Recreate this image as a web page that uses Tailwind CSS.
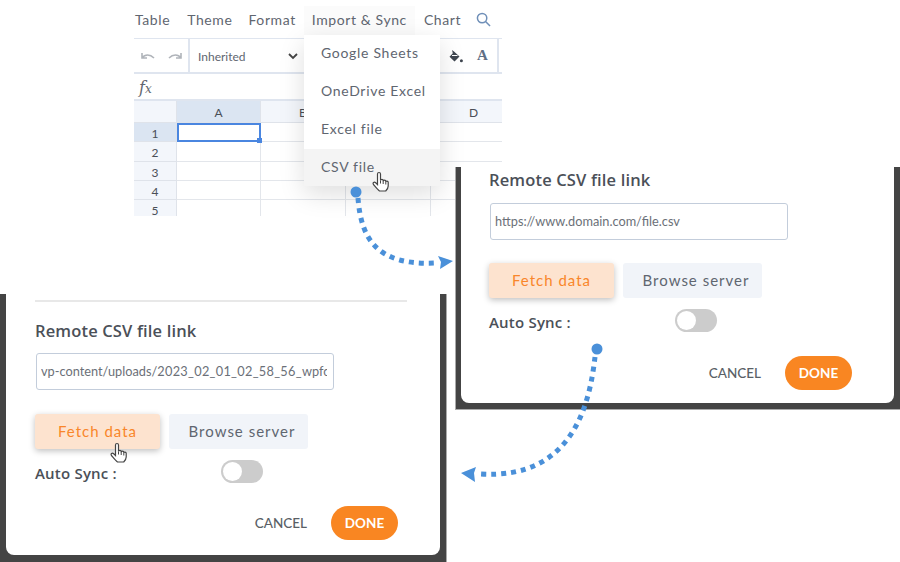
<!DOCTYPE html>
<html lang="en">
<head>
  <meta charset="UTF-8" />
  <title>CSV import</title>
  <script src="https://cdn.jsdelivr.net/npm/@tailwindcss/browser@4"></script>
</head>
<body class="bg-white font-['Lato',sans-serif] text-[#4a4f57]">
  <div class="relative w-[900px] h-[562px] overflow-hidden bg-white">

    <!-- spreadsheet -->
    <div class="absolute left-[134px] top-0 w-[368px] h-[216px] flex flex-col overflow-hidden">
      <div class="h-[39px] flex items-center gap-[17px] pl-[1px] text-[14px] tracking-[0.6px] text-[#5f6670] border-b border-[#dfe5ef]">
        <span>Table</span>
        <span>Theme</span>
        <span class="-ml-[1px]">Format</span>
        <span class="-ml-[9px] -mr-[8px] px-[8px] h-[30px] mt-[3px] pb-[2px] flex items-center bg-[#fbfbfb]">Import &amp; Sync</span>
        <span>Chart</span>
        <svg class="w-[15px] h-[15px] ml-[-2px]" viewBox="0 0 16 16" fill="none" stroke="#6f8fb8" stroke-width="1.6"><circle cx="6.500" cy="6.500" r="5"/><path d="M10.200 10.200 15 15"/></svg>
      </div>
      <div class="h-[35px] flex items-center border-b-2 border-[#dfe5ef]">
        <div class="w-[56px] h-full flex items-center pl-[7px] gap-[13px] border-r-2 border-[#dfe5ef]">
          <svg class="w-[14px] h-[8px]" viewBox="0 0 14 8" fill="none" stroke="#b0b4ba" stroke-width="1.600"><path d="M1 1v5h5M1 6c3-4 8-4 12 0"/></svg>
          <svg class="w-[14px] h-[8px]" viewBox="0 0 14 8" fill="none" stroke="#b0b4ba" stroke-width="1.600"><path d="M13 1v5H8M13 6C10 2 5 2 1 6"/></svg>
        </div>
        <div class="w-[114px] flex items-center justify-between pl-[8px] pr-[6px] pt-[2px] text-[12px] text-[#5f6670]">
          <span>Inherited</span>
          <svg class="w-[10px] h-[7px]" viewBox="0 0 10 7" fill="none" stroke="#444" stroke-width="1.800"><path d="M1 1l4 4 4-4"/></svg>
        </div>
        <div class="ml-auto mr-[3px] w-[66px] h-full flex items-center gap-[14px] pl-[16px] border-r-2 border-[#dfe5ef]">
          <svg class="w-[14px] h-[13px] mt-[1px]" viewBox="0 0 14 13"><path d="M3 0l2 1.500L10.500 6.500 5.500 11.500 .5 6.700 3.800 3.200z" fill="#3f4650"/><path d="M3 5.500h5.500" stroke="#fff" stroke-width="1"/><circle cx="12.400" cy="10.800" r="1.500" fill="#3f4650"/></svg>
          <span class="font-['Liberation_Serif',serif] text-[15px] font-bold text-[#5f6f86]">A</span>
        </div>
      </div>
      <div class="h-[27px] flex items-center pl-[5px] pt-[2px] border-b-2 border-[#dfe5ef] font-['DejaVu_Serif',serif] italic text-[#5f6670]"><span class="text-[16px]">f</span><span class="text-[12px] mt-[3px]">x</span></div>
      <div class="flex-1 grid grid-cols-[43px_84px_85px_85px_85px] grid-rows-[22px_19px_20px_19px_19px_16px] text-[12px] text-[#4a4f57] text-center">
        <div class="bg-[#f3f6fb] border-r border-b border-[#dfe3ea]"></div>
        <div class="bg-[#dbe5f2] border-r border-b border-[#dfe3ea] leading-[23px]">A</div>
        <div class="bg-[#f3f6fb] border-r border-b border-[#dfe3ea] leading-[23px]">B</div>
        <div class="bg-[#f3f6fb] border-r border-b border-[#dfe3ea] leading-[23px]">C</div>
        <div class="bg-[#f3f6fb] border-b border-[#dfe3ea] leading-[23px]">D</div>

        <div class="bg-[#dbe5f2] border-r border-b border-[#dfe3ea] leading-[21px]">1</div>
        <div class="relative border-2 border-[#4a86e0]"><span class="absolute right-[-3px] bottom-[-3px] w-[5px] h-[5px] bg-[#4a86e0]"></span></div>
        <div class="border-r border-b border-[#e3e6eb]"></div><div class="border-r border-b border-[#e3e6eb]"></div><div class="border-b border-[#e3e6eb]"></div>

        <div class="bg-[#f3f6fb] border-r border-b border-[#dfe3ea] leading-[21px]">2</div>
        <div class="border-r border-b border-[#e3e6eb]"></div><div class="border-r border-b border-[#e3e6eb]"></div><div class="border-r border-b border-[#e3e6eb]"></div><div class="border-b border-[#e3e6eb]"></div>

        <div class="bg-[#f3f6fb] border-r border-b border-[#dfe3ea] leading-[21px]">3</div>
        <div class="border-r border-b border-[#e3e6eb]"></div><div class="border-r border-b border-[#e3e6eb]"></div><div class="border-r border-b border-[#e3e6eb]"></div><div class="border-b border-[#e3e6eb]"></div>

        <div class="bg-[#f3f6fb] border-r border-b border-[#dfe3ea] leading-[21px]">4</div>
        <div class="border-r border-b border-[#e3e6eb]"></div><div class="border-r border-b border-[#e3e6eb]"></div><div class="border-r border-b border-[#e3e6eb]"></div><div class="border-b border-[#e3e6eb]"></div>

        <div class="bg-[#f3f6fb] border-r border-[#dfe3ea] leading-[21px]">5</div>
        <div class="border-r border-[#e3e6eb]"></div><div class="border-r border-[#e3e6eb]"></div><div class="border-r border-[#e3e6eb]"></div><div></div>
      </div>
    </div>

    <!-- dropdown -->
    <div class="absolute left-[304px] top-[35px] w-[136px] h-[151px] bg-white shadow-[0_8px_24px_rgba(0,0,0,0.13)] flex flex-col text-[14px] tracking-[0.7px] text-[#5f6670]">
      <div class="h-[38px] flex items-center pl-[17px] pb-[3px]">Google Sheets</div>
      <div class="h-[38px] flex items-center pl-[17px] pb-[3px]">OneDrive Excel</div>
      <div class="h-[38px] flex items-center pl-[17px] pb-[3px]">Excel file</div>
      <div class="h-[37px] flex items-center pl-[17px] pb-[2px] bg-[#f4f4f4]">CSV file</div>
    </div>

    <!-- right dialog -->
    <div class="absolute left-[455px] top-[167px] w-[445px] h-[243px] bg-[#444444] pl-[5px] pr-[6px] pb-[6px] border-b border-l border-[#aaaaaa]">
      <div class="relative w-full h-full bg-white rounded-b-[8px] pl-[28px]">
        <h3 class="pt-[3px] text-[16.500px] tracking-[0.15px] font-['Open_Sans',sans-serif] font-semibold leading-[19px] text-[#4b5058]">Remote CSV file link</h3>
        <div class="ml-[1px] mt-[14px] w-[298px] h-[37px] border border-[#c3cddb] rounded-[3px] flex items-center pl-[4px] text-[12.750px] text-[#6b7078]">https://www.domain.com/file.csv</div>
        <div class="mt-[23px] flex gap-[9px] text-[15px] tracking-[1px]">
          <div class="w-[125px] h-[35px] flex items-center justify-center rounded-[3px] bg-[#fde3cf] text-[#f9862a] shadow-[0_2px_6px_rgba(0,0,0,0.25)]">Fetch data</div>
          <div class="w-[139px] h-[35px] flex items-center justify-center pl-[7px] rounded-[3px] bg-[#f1f4f9] text-[#5f6670]">Browse server</div>
        </div>
        <div class="mt-[11px] h-[23px] flex items-center justify-between w-[228px] text-[15px] tracking-[0.2px] font-['Open_Sans',sans-serif] font-semibold text-[#4b5058]">
          <span class="pt-[3px]">Auto Sync :</span>
          <div class="w-[42px] h-[23px] rounded-full bg-[#cccccc] p-[2px]"><div class="w-[19px] h-[19px] rounded-full bg-white"></div></div>
        </div>
        <div class="absolute right-[42px] bottom-[13px] flex items-center gap-[24px]">
          <span class="text-[13.500px] font-medium text-[#5a5f66]">CANCEL</span>
          <div class="w-[67px] h-[34px] rounded-full bg-[#f98622] flex items-center justify-center text-[13.500px] font-bold text-white">DONE</div>
        </div>
      </div>
    </div>

    <!-- left dialog -->
    <div class="absolute left-0 top-[294px] w-[447px] h-[268px] bg-[#444444] pl-[6px] pr-[6px] pb-[7px] border-r border-[#aaaaaa]">
      <div class="relative w-full h-full bg-white rounded-b-[8px] pl-[29px]">
        <div class="w-[372px] pt-[6px] border-b-2 border-[#e8e8e8]"></div>
        <h3 class="pt-[19px] text-[16.500px] tracking-[0.15px] font-['Open_Sans',sans-serif] font-semibold leading-[19px] text-[#4b5058]">Remote CSV file link</h3>
        <div class="ml-[1px] mt-[13px] w-[298px] h-[37px] border border-[#c3cddb] rounded-[3px] flex items-center pl-[4px] pr-[6px] text-[12.750px] text-[#6b7078]">
          <div class="overflow-hidden whitespace-nowrap">vp-content/uploads/<span class="tracking-[0.3px]">2023_02_01_02_58_56_</span>wpfc_import</div>
        </div>
        <div class="mt-[24px] flex gap-[9px] text-[15px] tracking-[1px]">
          <div class="w-[125px] h-[35px] flex items-center justify-center rounded-[3px] bg-[#fde3cf] text-[#f9862a] shadow-[0_2px_6px_rgba(0,0,0,0.25)]">Fetch data</div>
          <div class="w-[139px] h-[35px] flex items-center justify-center pl-[7px] rounded-[3px] bg-[#f1f4f9] text-[#5f6670]">Browse server</div>
        </div>
        <div class="mt-[11px] h-[23px] flex items-center justify-between w-[228px] text-[15px] tracking-[0.2px] font-['Open_Sans',sans-serif] font-semibold text-[#4b5058]">
          <span class="pt-[3px]">Auto Sync :</span>
          <div class="w-[42px] h-[23px] rounded-full bg-[#cccccc] p-[2px]"><div class="w-[19px] h-[19px] rounded-full bg-white"></div></div>
        </div>
        <div class="absolute right-[42px] bottom-[15px] flex items-center gap-[24px]">
          <span class="text-[13.500px] font-medium text-[#5a5f66] pt-[1px]">CANCEL</span>
          <div class="w-[67px] h-[34px] rounded-full bg-[#f98622] flex items-center justify-center text-[13.500px] font-bold text-white">DONE</div>
        </div>
      </div>
    </div>

    <!-- arrows and cursors -->
    <svg class="absolute left-0 top-0 w-[900px] h-[562px] pointer-events-none" viewBox="0 0 900 562" fill="none">
      <defs>
        <g id="hand">
          <path d="M5.500 2c0-2 3-2 3 0v6.500c0-1.600 2.700-1.600 2.700 0v.7c0-1.500 2.600-1.500 2.600 0v.8c0-1.300 2.400-1.300 2.400.3v3.700c0 2.500-1.500 4-2.500 5H7.500C6 18 4 15.500 1.500 12.500c-1.300-1.600.7-3 2.200-1.700L5.500 12.500z" fill="#fff" stroke="#444" stroke-width="1.200"/>
          <path d="M8.500 8.500v3M11.200 9v3M13.800 10v2.500" stroke="#444" stroke-width="1"/>
        </g>
      </defs>
      <circle cx="356" cy="192" r="5.500" fill="#4a90d9"/>
      <path d="M358 198C361 238 376 266 436 263" stroke="#4a90d9" stroke-width="5" stroke-dasharray="5 5"/>
      <path d="M453 261 438 256 441 262 440 269z" fill="#4a90d9"/>
      <circle cx="597" cy="349" r="5.500" fill="#4a90d9"/>
      <path d="M595 357C590 400 575 480 480 474" stroke="#4a90d9" stroke-width="5" stroke-dasharray="5 5"/>
      <path d="M461 473 476 467 474 473 475 482z" fill="#4a90d9"/>
      <use href="#hand" transform="translate(372 172)"/>
      <use href="#hand" transform="translate(110 443)"/>
    </svg>
  </div>
</body>
</html>
